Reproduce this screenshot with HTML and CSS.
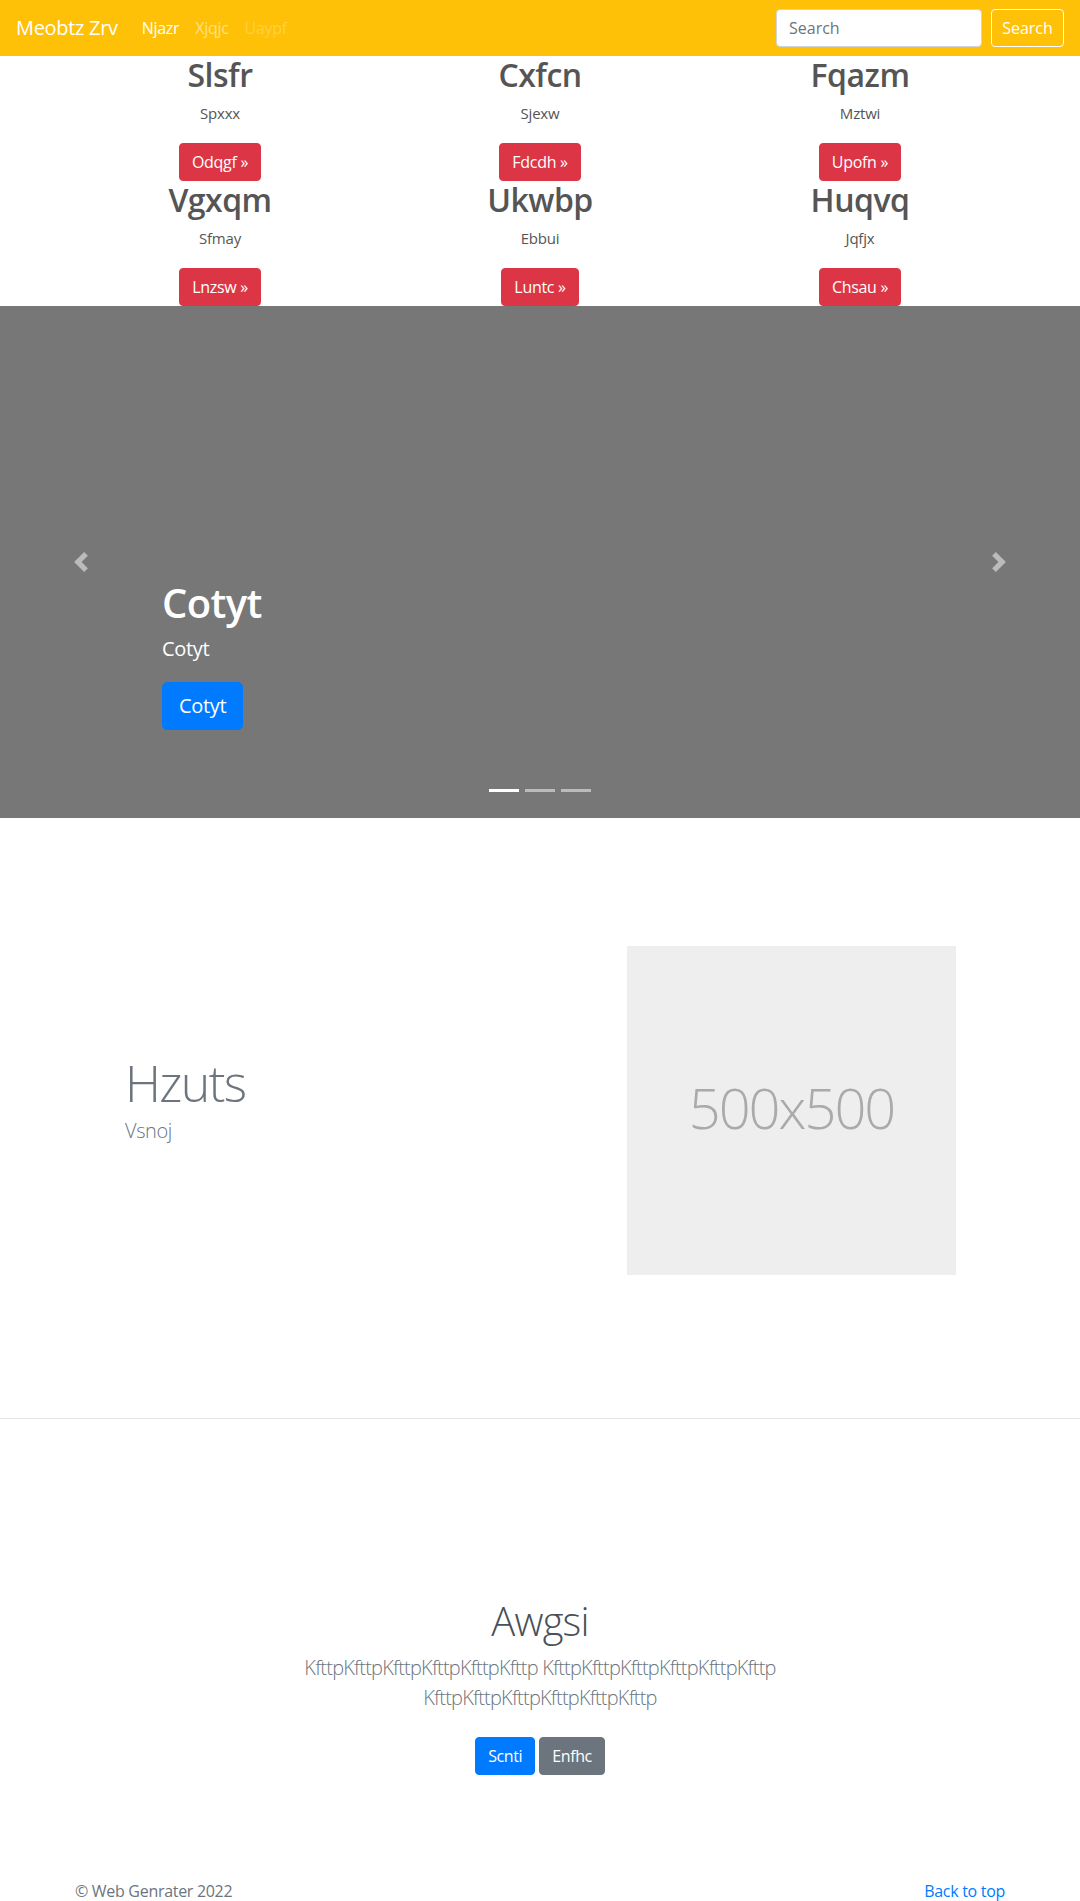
FILE: index.html
```html
<!DOCTYPE html>
<html lang="en">
<head>
<meta charset="utf-8">
<title>Meobtz Zrv</title>
<link rel="stylesheet" href="styles.css">
</head>
<body>
<nav class="navbar">
  <a class="brand" href="#">Meobtz Zrv</a>
  <ul class="nav">
    <li><a class="nav-link active" href="#">Njazr</a></li>
    <li><a class="nav-link" href="#">Xjqjc</a></li>
    <li><a class="nav-link disabled" href="#">Uaypf</a></li>
  </ul>
  <form class="search">
    <input class="search-input" type="text" placeholder="Search">
    <button class="search-btn" type="button">Search</button>
  </form>
</nav>

<div class="features">
  <div class="feature-row">
    <div class="feature"><h2>Slsfr</h2><p>Spxxx</p><p class="act"><a class="btn btn-danger" href="#">Odqgf »</a></p></div>
    <div class="feature"><h2>Cxfcn</h2><p>Sjexw</p><p class="act"><a class="btn btn-danger" href="#">Fdcdh »</a></p></div>
    <div class="feature"><h2>Fqazm</h2><p>Mztwi</p><p class="act"><a class="btn btn-danger" href="#">Upofn »</a></p></div>
  </div>
  <div class="feature-row">
    <div class="feature"><h2>Vgxqm</h2><p>Sfmay</p><p class="act"><a class="btn btn-danger" href="#">Lnzsw »</a></p></div>
    <div class="feature"><h2>Ukwbp</h2><p>Ebbui</p><p class="act"><a class="btn btn-danger" href="#">Luntc »</a></p></div>
    <div class="feature"><h2>Huqvq</h2><p>Jqfjx</p><p class="act"><a class="btn btn-danger" href="#">Chsau »</a></p></div>
  </div>
</div>

<div class="carousel">
  <a class="ctrl" href="#" aria-label="Previous">
    <svg class="ctrl-icon" viewBox="0 0 8 8" width="20" height="20"><path fill="#fff" d="M5.25 0l-4 4 4 4 1.5-1.5L4.25 4l2.5-2.5L5.25 0z"/></svg>
  </a>
  <div class="caption">
    <h1>Cotyt</h1>
    <p>Cotyt</p>
    <p class="last"><a class="btn btn-lg btn-primary" href="#">Cotyt</a></p>
  </div>
  <a class="ctrl" href="#" aria-label="Next">
    <svg class="ctrl-icon" viewBox="0 0 8 8" width="20" height="20"><path fill="#fff" d="M2.75 0l-1.5 1.5L3.75 4l-2.5 2.5L2.75 8l4-4-4-4z"/></svg>
  </a>
  <ol class="indicators">
    <li class="active"></li>
    <li></li>
    <li></li>
  </ol>
</div>

<section class="featurette">
  <div class="featurette-text">
    <h2 class="featurette-heading">Hzuts</h2>
    <p class="lead">Vsnoj</p>
  </div>
  <div class="placeholder"><span>500x500</span></div>
</section>

<hr class="divider">

<section class="jumbotron">
  <div class="jumbo-inner">
    <h1 class="jumbo-heading">Awgsi</h1>
    <p class="lead muted">KfttpKfttpKfttpKfttpKfttpKfttp KfttpKfttpKfttpKfttpKfttpKfttp KfttpKfttpKfttpKfttpKfttpKfttp</p>
    <p class="jumbo-actions"><a class="btn btn-primary" href="#">Scnti</a> <a class="btn btn-secondary" href="#">Enfhc</a></p>
  </div>
</section>

<footer class="footer">
  <p class="copy">© Web Genrater 2022</p>
  <p class="totop"><a href="#">Back to top</a></p>
</footer>
</body>
</html>
```

FILE: styles.css
```css
* { box-sizing: border-box; }

html, body {
  margin: 0;
  padding: 0;
}

body {
  font-family: "Open Sans", "Noto Sans", "Liberation Sans", sans-serif;
  font-size: 16px;
  line-height: 1.5;
  color: #212529;
  background: #fff;
}

a { text-decoration: none; }

/* Navbar */
.navbar {
  display: flex;
  align-items: center;
  height: 56px;
  padding: 0 16px;
  background: #ffc107;
}

.brand {
  font-size: 20px;
  line-height: 30px;
  color: #fff;
  margin-right: 16px;
  letter-spacing: -0.3px;
}

.nav {
  display: flex;
  list-style: none;
  margin: 0;
  padding: 0;
  flex: 1;
}

.nav-link {
  display: block;
  padding: 8px;
  font-size: 16px;
  line-height: 24px;
  color: rgba(255, 255, 255, 0.5);
  letter-spacing: -0.3px;
}

.nav-link.active { color: #fff; }
.nav-link.disabled { color: rgba(255, 255, 255, 0.25); }

.search {
  display: flex;
  align-items: center;
  gap: 9px;
  margin: 0;
}

.search-input {
  width: 206px;
  height: 38px;
  padding: 6px 12px;
  font-family: inherit;
  font-size: 16px;
  color: #495057;
  background: #fff;
  border: 1px solid #ced4da;
  border-radius: 4px;
}

.search-input::placeholder { color: #6c757d; }

.search-btn {
  width: 73px;
  height: 38px;
  padding: 0;
  font-family: inherit;
  font-size: 16px;
  color: #fff;
  background: transparent;
  border: 1px solid #fff;
  border-radius: 4px;
}

/* Buttons */
.btn {
  display: inline-block;
  padding: 6px 12px;
  font-size: 16px;
  line-height: 24px;
  border: 1px solid transparent;
  border-radius: 4px;
  color: #fff;
  letter-spacing: -0.3px;
  vertical-align: middle;
}

.btn-danger { background: #dc3545; border-color: #dc3545; }
.btn-primary { background: #007bff; border-color: #007bff; }
.btn-secondary { background: #6c757d; border-color: #6c757d; }

.btn-lg {
  padding: 8px 16px;
  font-size: 20px;
  line-height: 30px;
  border-radius: 5px;
}

/* Features */
.features {
  width: 960px;
  margin: 0 auto;
}

.feature-row {
  display: grid;
  grid-template-columns: repeat(3, 1fr);
}

.feature {
  text-align: center;
  color: #555;
}

.feature h2 {
  margin: 0 0 8px;
  font-size: 32px;
  line-height: 38.4px;
  font-weight: 600;
  letter-spacing: -0.5px;
}

.feature p {
  margin: 0 0 16px;
  font-size: 15px;
  letter-spacing: -0.2px;
}

.feature p.act {
  margin: 0;
  line-height: 38px;
}

/* Carousel */
.carousel {
  position: relative;
  display: grid;
  grid-template-columns: 15% 1fr 15%;
  height: 512px;
  background: #777;
}

.ctrl {
  display: flex;
  align-items: center;
  justify-content: center;
  opacity: 0.5;
}

.ctrl-icon { display: block; }

.caption {
  align-self: end;
  padding: 20px 0 68px;
  color: #fff;
}

.caption h1 {
  margin: 0 0 8px;
  font-size: 40px;
  line-height: 48px;
  font-weight: 600;
  letter-spacing: -0.6px;
}

.caption p {
  margin: 0 0 17px;
  font-size: 20px;
  line-height: 28px;
  letter-spacing: -0.3px;
}

.caption p.last {
  margin-bottom: 20px;
  line-height: 48px;
}

.indicators {
  position: absolute;
  left: 0;
  right: 0;
  bottom: 16px;
  display: flex;
  justify-content: center;
  margin: 0;
  padding: 0;
  list-style: none;
}

.indicators li {
  width: 30px;
  height: 3px;
  margin: 10px 3px;
  background: #fff;
  opacity: 0.5;
}

.indicators li.active { opacity: 1; }

/* Featurette */
.featurette {
  display: flex;
  align-items: center;
  padding: 128px 0 0 125px;
}

.featurette-text {
  width: 502px;
  color: #6c757d;
}

.featurette-heading {
  margin: 0 0 8px;
  font-size: 50px;
  line-height: 1;
  font-weight: 300;
  letter-spacing: -1.6px;
}

.lead {
  margin: 0 0 16px;
  font-size: 20px;
  line-height: 30px;
  font-weight: 300;
  letter-spacing: -0.4px;
}

.placeholder {
  display: flex;
  align-items: center;
  justify-content: center;
  width: 329px;
  height: 329px;
  padding-bottom: 6px;
  background: #eee;
  color: #aaa;
  font-size: 56px;
  font-weight: 300;
  letter-spacing: -2px;
}

.divider {
  margin: 143px 0 0;
  border: 0;
  border-top: 1px solid rgba(0, 0, 0, 0.1);
}

/* Jumbotron */
.jumbotron {
  padding: 178px 0 48px;
  text-align: center;
}

.jumbo-inner {
  max-width: 640px;
  margin: 0 auto;
  padding: 0 15px;
}

.jumbo-heading {
  margin: 0 0 8px;
  font-size: 40px;
  line-height: 48px;
  font-weight: 300;
  color: #495057;
  letter-spacing: -0.8px;
}

.muted { color: #6c757d; }

.jumbotron .lead { letter-spacing: -0.8px; }

.jumbo-actions {
  margin: 0;
}

.jumbo-actions .btn {
  margin: 8px 0;
  letter-spacing: -0.4px;
}

/* Footer */
.footer {
  display: flex;
  justify-content: space-between;
  width: 960px;
  margin: 0 auto;
  padding: 48px 15px;
  color: #6c757d;
}

.footer p {
  margin: 0 0 16px;
  letter-spacing: -0.3px;
}

.footer a { color: #007bff; }
```
